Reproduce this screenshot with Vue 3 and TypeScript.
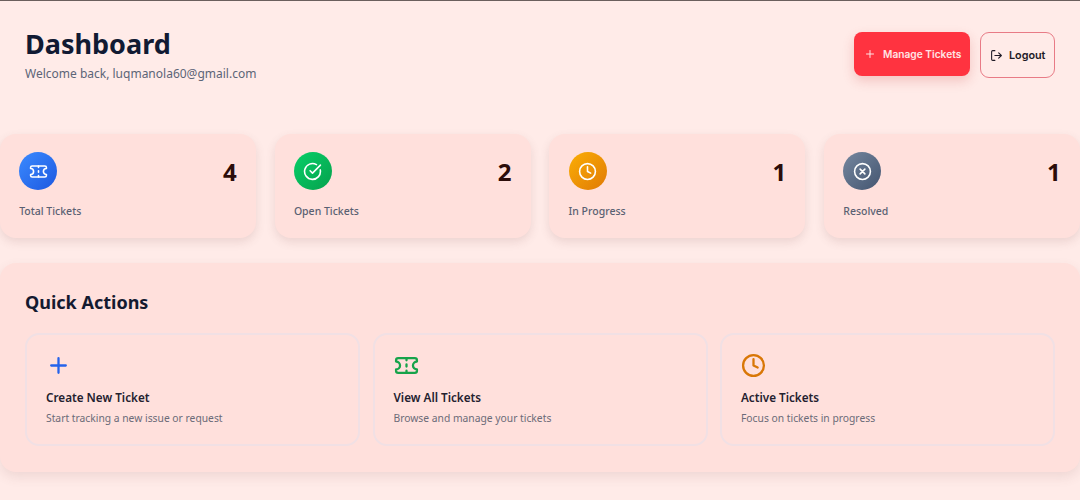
<script setup lang="ts">
const stats = [
  { label: 'Total Tickets', value: 4, tone: 'blue', icon: 'ticket' },
  { label: 'Open Tickets', value: 2, tone: 'green', icon: 'check' },
  { label: 'In Progress', value: 1, tone: 'amber', icon: 'clock' },
  { label: 'Resolved', value: 1, tone: 'slate', icon: 'cross' },
];

const actions = [
  { title: 'Create New Ticket', text: 'Start tracking a new issue or request', icon: 'plus', color: '#2563eb' },
  { title: 'View All Tickets', text: 'Browse and manage your tickets', icon: 'ticket', color: '#16a34a' },
  { title: 'Active Tickets', text: 'Focus on tickets in progress', icon: 'clock', color: '#d97706' },
];

const ticketPath =
  'M2 8.2a3.8 3.8 0 0 1 0 7.6V17a2 2 0 0 0 2 2h16a2 2 0 0 0 2-2v-1.2a3.8 3.8 0 0 1 0-7.6V7a2 2 0 0 0-2-2H4a2 2 0 0 0-2 2Z';
const ticketDashes = 'M12 5v2M12 17v2M12 11v2';
</script>

<template>
  <div class="page">
    <header class="top">
      <div>
        <h1>Dashboard</h1>
        <p>Welcome back, luqmanola60@gmail.com</p>
      </div>
      <div class="top-actions">
        <button class="btn btn-primary">
          <svg viewBox="0 0 24 24" width="12" height="12" fill="none" stroke="currentColor" stroke-width="2" stroke-linecap="round">
            <path d="M5 12h14M12 5v14" />
          </svg>
          Manage Tickets
        </button>
        <button class="btn btn-ghost">
          <svg viewBox="0 0 24 24" width="13" height="13" fill="none" stroke="currentColor" stroke-width="2" stroke-linecap="round" stroke-linejoin="round">
            <path d="M9 21H5a2 2 0 0 1-2-2V5a2 2 0 0 1 2-2h4M16 17l5-5-5-5M21 12H9" />
          </svg>
          Logout
        </button>
      </div>
    </header>

    <section class="stats">
      <div v-for="s in stats" :key="s.label" class="stat">
        <div class="stat-row">
          <span class="badge" :class="s.tone">
            <svg viewBox="0 0 24 24" width="19" height="19" fill="none" stroke="#fff" stroke-width="2" stroke-linecap="round" stroke-linejoin="round">
              <template v-if="s.icon === 'ticket'">
                <path :d="ticketPath" />
                <path :d="ticketDashes" />
              </template>
              <template v-else-if="s.icon === 'check'">
                <path d="M21.8 10A10 10 0 1 1 17 3.3" />
                <path d="m9 11 3 3L22 4" />
              </template>
              <template v-else-if="s.icon === 'clock'">
                <circle cx="12" cy="12" r="10" />
                <path d="M12 6v6l4 2" />
              </template>
              <template v-else>
                <circle cx="12" cy="12" r="10" />
                <path d="m15 9-6 6M9 9l6 6" />
              </template>
            </svg>
          </span>
          <span class="stat-value">{{ s.value }}</span>
        </div>
        <div class="stat-label">{{ s.label }}</div>
      </div>
    </section>

    <section class="panel">
      <h2>Quick Actions</h2>
      <div class="action-grid">
        <div v-for="a in actions" :key="a.title" class="action">
          <svg class="action-icon" viewBox="0 0 24 24" width="25" height="25" fill="none" :stroke="a.color" stroke-width="2.2" stroke-linecap="round" stroke-linejoin="round">
            <path v-if="a.icon === 'plus'" d="M5 12h14M12 5v14" />
            <template v-else-if="a.icon === 'ticket'">
              <path :d="ticketPath" />
              <path :d="ticketDashes" />
            </template>
            <template v-else>
              <circle cx="12" cy="12" r="10" />
              <path d="M12 6v6l4 2" />
            </template>
          </svg>
          <div class="action-title">{{ a.title }}</div>
          <div class="action-text">{{ a.text }}</div>
        </div>
      </div>
    </section>
  </div>
</template>

<style>
html,
body {
  margin: 0;
  background: #ffebe8;
}
</style>

<style scoped>
.page {
  height: 500px;
  box-sizing: border-box;
  overflow: hidden;
  border-top: 1px solid #6b5f5d;
  background: #ffebe8;
  font-family: "Noto Sans", "Open Sans", sans-serif;
}

.top {
  display: flex;
  justify-content: space-between;
  align-items: flex-start;
  height: 133px;
  box-sizing: border-box;
  padding: 24px 25px 0;
}
h1 {
  margin: 0;
  font-size: 27px;
  line-height: 37px;
  font-weight: 700;
  color: #111a33;
}
.top p {
  margin: 3px 0 0;
  font-size: 12px;
  line-height: 18px;
  color: #5c6577;
}
.top-actions {
  display: flex;
  gap: 10px;
  padding-top: 7px;
}
.btn {
  display: flex;
  align-items: center;
  gap: 7px;
  box-sizing: border-box;
  font-family: Inter, sans-serif;
  font-size: 10.2px;
  font-weight: 600;
  border-radius: 8px;
  cursor: pointer;
}
.btn-primary {
  width: 116px;
  height: 44px;
  padding: 0 0 0 10px;
  border: 0;
  background: #ff3340;
  color: #ffe4e4;
  box-shadow: 0 5px 12px rgba(200, 60, 60, 0.22);
}
.btn-ghost {
  width: 75px;
  height: 46px;
  padding: 0 0 0 9px;
  gap: 6px;
  font-size: 10.8px;
  border: 1.5px solid #e87b86;
  border-radius: 9px;
  background: #ffebe8;
  color: #1e1a26;
}

.stats {
  display: grid;
  grid-template-columns: repeat(4, 1fr);
  gap: 18.8px;
}
.stat {
  height: 104px;
  box-sizing: border-box;
  padding: 18px 19.2px 0;
  background: #ffe0dc;
  border-radius: 16px;
  box-shadow: 0 4px 10px rgba(120, 70, 70, 0.14);
}
.stat-row {
  display: flex;
  justify-content: space-between;
  align-items: center;
}
.badge {
  display: flex;
  align-items: center;
  justify-content: center;
  width: 38px;
  height: 38px;
  border-radius: 50%;
}
.blue { background: linear-gradient(135deg, #3b8bff, #1d58e0); }
.green { background: linear-gradient(135deg, #07cf68, #06a14d); }
.amber { background: linear-gradient(135deg, #fbae05, #e07a06); }
.slate { background: linear-gradient(135deg, #75879f, #445570); }
.stat-value {
  font-size: 24px;
  line-height: 32px;
  font-weight: 700;
  color: #2c0d0a;
  padding-top: 2px;
}
.stat-label {
  margin-top: 13px;
  font-family: "Noto Sans", sans-serif;
  font-size: 10.5px;
  line-height: 16px;
  font-weight: 500;
  color: #5a6072;
}

.panel {
  height: 209px;
  box-sizing: border-box;
  margin-top: 25px;
  padding: 26px 25px 0;
  background: #ffe0dc;
  border-radius: 16px;
  box-shadow: 0 5px 12px rgba(120, 70, 70, 0.12);
}
h2 {
  margin: 0;
  font-size: 18px;
  line-height: 26px;
  font-weight: 700;
  color: #141a30;
}
.action-grid {
  display: grid;
  grid-template-columns: repeat(3, 1fr);
  gap: 12.5px;
  margin-top: 18px;
}
.action {
  height: 113px;
  box-sizing: border-box;
  padding: 18px 19px 0;
  border: 2px solid #f1e0e4;
  border-radius: 14px;
}
.action-icon {
  display: block;
}
.action-title {
  margin-top: 11px;
  font-size: 11.7px;
  line-height: 17px;
  font-weight: 600;
  color: #24212f;
}
.action-text {
  margin-top: 5px;
  font-size: 10.3px;
  line-height: 15px;
  color: #6b6b78;
}
</style>
